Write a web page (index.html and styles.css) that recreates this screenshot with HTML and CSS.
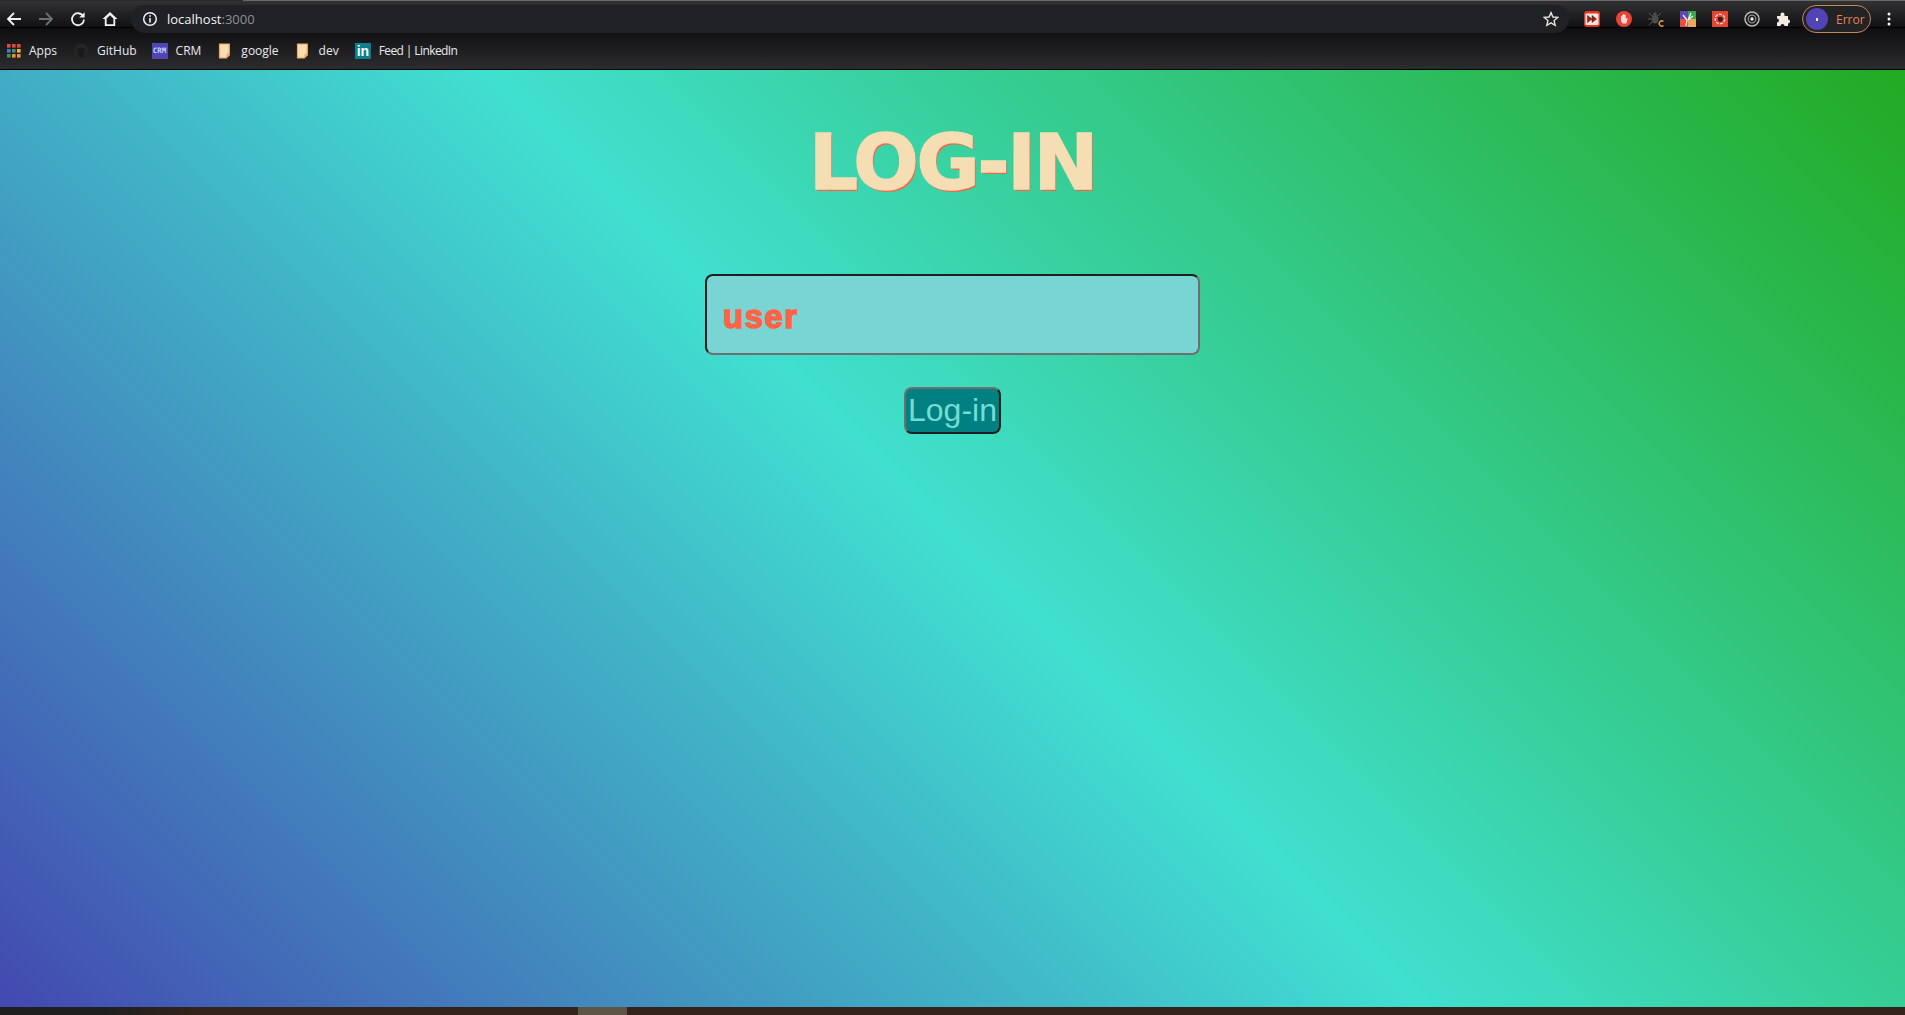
FILE: index.html
```html
<!DOCTYPE html>
<html lang="en">
<head>
    <meta charset="utf-8">
    <title>Log-in</title>
    <link rel="stylesheet" href="styles.css">
</head>
<body>
    <header class="toolbar">
        <nav class="nav-buttons">
            <svg class="nav-icon" viewBox="0 0 16 16"><path d="M15 8H2M8 2 2 8l6 6" fill="none" stroke="#f1f3f4" stroke-width="1.8"/></svg>
            <svg class="nav-icon" viewBox="0 0 16 16"><path d="M1 8h13M8 2l6 6-6 6" fill="none" stroke="#6f7072" stroke-width="1.8"/></svg>
            <svg class="nav-icon" viewBox="0 0 16 16"><path d="M13.2 5.2A6 6 0 1 0 14 8.5" fill="none" stroke="#f1f3f4" stroke-width="1.8"/><path d="M14.6 1.2v5.4H9.2z" fill="#f1f3f4"/></svg>
            <svg class="nav-icon" viewBox="0 0 16 16"><path d="M8 1 .5 8h2.300v7h10.400V8h2.300zM4.600 7.600 8 4.200l3.400 3.400v5.700H4.600z" fill="#f1f3f4" fill-rule="evenodd"/></svg>
        </nav>
        <div class="omnibox">
            <svg class="info-icon" viewBox="0 0 16 16"><circle cx="8" cy="8" r="6.3" fill="none" stroke="#f1f3f4" stroke-width="1.5"/><path d="M7.2 7h1.6v4.6H7.2zM7.2 4.2h1.6v1.6H7.2z" fill="#f1f3f4"/></svg>
            <span class="url">localhost<span class="url-port">:3000</span></span>
            <svg class="star-icon" viewBox="0 0 16 16"><path d="M8 1.6 9.9 6l4.8.4-3.6 3.2 1.1 4.7L8 11.8l-4.2 2.5 1.1-4.7-3.6-3.2L6.100 6z" fill="none" stroke="#e6e3da" stroke-width="1.400"/></svg>
        </div>
        <div class="extensions">
            <svg class="ext-icon" viewBox="0 0 16 16"><rect width="16" height="16" rx="3" fill="#e5352b"/><rect x="1.500" y="2.500" width="13" height="11.500" rx="1" fill="#f3e7dc"/><path d="M3.500 4.500l4.500 3.500-4.500 3.500zM8 4.500l4.500 3.500L8 11.500z" fill="#a51c18" stroke="#3a1c1a" stroke-width=".5"/></svg>
            <svg class="ext-icon" viewBox="0 0 16 16"><circle cx="8" cy="8" r="8" fill="#ea4335"/><path d="M5 7V5h1v2-3h1.200v3-4h1.300v4-3h1.200v4l1-1h1L10.500 12.500H6.500L5 10z" fill="#f6d9d0"/></svg>
            <svg class="ext-icon" viewBox="0 0 16 16"><ellipse cx="7" cy="8" rx="3.500" ry="4.500" fill="#4b4b4b"/><circle cx="7" cy="3" r="1.800" fill="#4b4b4b"/><path d="M1 2l3 3M13 2l-3 3M0 8h3M1 14l3-3" stroke="#5a5a5a"/><path d="M15.500 10.500a2.600 2.600 0 1 0 0 4" fill="none" stroke="#e2a23f" stroke-width="1.400"/></svg>
            <svg class="ext-icon" viewBox="0 0 16 16"><rect width="8" height="8" fill="#5b49b5"/><rect x="8" width="8" height="8" fill="#35a84a"/><rect y="8" width="8" height="8" fill="#ea4f3d"/><rect x="8" y="8" width="8" height="8" fill="#eda765"/><path d="M7 9 3 4M8 9l3-7M8 9l5-4M7 9l-1 6" stroke="#f4f0e8" stroke-width="1.300"/></svg>
            <svg class="ext-icon" viewBox="0 0 16 16"><rect width="16" height="16" fill="#ea4335"/><circle cx="8" cy="8" r="4.800" fill="none" stroke="#f6d9d0" stroke-width="1.400" stroke-dasharray="3 1.200"/><path d="M6 6h4l1 3-2 2-3-1z" fill="#30201e"/></svg>
            <svg class="ext-icon" viewBox="0 0 16 16"><circle cx="8" cy="8" r="7" fill="none" stroke="#b9bab8" stroke-width="1.500"/><circle cx="8" cy="8" r="3.800" fill="none" stroke="#8c8d8b" stroke-width="1.300"/><circle cx="8" cy="8" r="1.700" fill="#f1f3f4"/></svg>
            <svg class="ext-icon" viewBox="0 0 16 16"><path d="M1 5h3.500V3.500a2 2 0 0 1 4 0V5H12v3.500a2 2 0 0 1 0 4V15H8.500a2 2 0 0 0-4 0H1v-3.500a2 2 0 0 0 0-4z" fill="#f1ede2"/></svg>
        </div>
        <div class="profile">
            <span class="avatar"><span class="avatar-dot"></span></span>
            <span class="profile-label">Error</span>
        </div>
        <svg class="menu-icon" viewBox="0 0 4 16"><circle cx="2" cy="3" r="1.500"/><circle cx="2" cy="8" r="1.500"/><circle cx="2" cy="13" r="1.500"/></svg>
    </header>

    <div class="bookmarks">
        <a class="bookmark">
            <svg class="bm-icon" viewBox="-1 0 16 16">
                <rect x="1" y="1" width="3.600" height="3.600" fill="#e5493a"/><rect x="6" y="1" width="3.600" height="3.600" fill="#e5493a"/><rect x="11" y="1" width="3.600" height="3.600" fill="#e5493a"/>
                <rect x="1" y="6" width="3.600" height="3.600" fill="#3f7fdd"/><rect x="6" y="6" width="3.600" height="3.600" fill="#3a9a5b"/><rect x="11" y="6" width="3.600" height="3.600" fill="#f2b632"/>
                <rect x="1" y="11" width="3.600" height="3.600" fill="#3a9a5b"/><rect x="6" y="11" width="3.600" height="3.600" fill="#e89136"/><rect x="11" y="11" width="3.600" height="3.600" fill="#e89136"/>
            </svg>
            <span>Apps</span>
        </a>
        <a class="bookmark">
            <svg class="bm-icon" viewBox="0 0 16 16"><circle cx="8" cy="8" r="7.600" fill="#242424"/><path d="M5.500 14v-3C4 9.500 4 6.500 5.500 5h5c1.500 1.500 1.500 4.500 0 6v3z" fill="#1a1a1a"/></svg>
            <span>GitHub</span>
        </a>
        <a class="bookmark bookmark-shift">
            <span class="crm-icon">CRM</span>
            <span>CRM</span>
        </a>
        <a class="bookmark">
            <svg class="bm-icon" viewBox="0 0 16 16"><path d="M2.500 1h9.800v11l-3 3H2.500z" fill="#f5deb3" stroke="#eda560" stroke-width="1.200"/><path d="M12.300 11H10v3" fill="none" stroke="#eda560"/></svg>
            <span>google</span>
        </a>
        <a class="bookmark">
            <svg class="bm-icon" viewBox="0 0 16 16"><path d="M2.500 1h9.800v11l-3 3H2.500z" fill="#f5deb3" stroke="#eda560" stroke-width="1.200"/><path d="M12.300 11H10v3" fill="none" stroke="#eda560"/></svg>
            <span>dev</span>
        </a>
        <a class="bookmark">
            <span class="in-icon">in</span>
            <span class="bookmark-tight">Feed | LinkedIn</span>
        </a>
    </div>

    <main class="page">
        <h1 class="title">LOG-IN</h1>
        <form class="login-form">
            <input class="user-input" type="text" placeholder="user">
            <button class="login-btn" type="button">Log-in</button>
        </form>
    </main>

    <footer class="taskbar">
        <div class="task-thumb"></div>
        <span class="clock">17:21</span>
    </footer>
</body>
</html>
```

FILE: styles.css
```css
* {
    box-sizing: border-box;
}
html, body {
    height: 100%;
}
body {
    margin: 0;
    height: 100vh;
    display: flex;
    flex-direction: column;
    overflow: hidden;
    font-family: "Open Sans", Arial, sans-serif;
    background: #202124;
}

/* browser chrome */
.toolbar {
    height: 28px;
    flex: none;
    display: flex;
    position: relative;
    z-index: 2;
    padding-left: 6px;
    background:
        linear-gradient(to right, #2a2a2a 243px, #6a6a6a 243px) top / 100% 1px no-repeat,
        linear-gradient(#333335 0, #111113 27px);
    border-bottom: 1px solid #000;
}
.nav-buttons {
    display: flex;
    gap: 16px;
    padding-top: 11px;
    height: 28px;
}
.nav-icon {
    width: 16px;
    height: 16px;
}
.omnibox {
    width: 1438px;
    height: 28px;
    margin: 5px 0 0 13px;
    padding: 0 10px 0 11px;
    display: flex;
    align-items: center;
    background: #202124;
    border-radius: 14px;
}
.info-icon {
    width: 16px;
    height: 16px;
}
.url {
    margin-left: 9px;
    font-size: 13px;
    color: #f1f3f4;
}
.url-port {
    color: #8d9094;
}
.star-icon {
    width: 16px;
    height: 16px;
    margin-left: auto;
}
.extensions {
    display: flex;
    gap: 16px;
    margin-left: 15px;
    padding-top: 11px;
    height: 28px;
}
.ext-icon {
    width: 16px;
    height: 16px;
}
.profile {
    width: 69px;
    height: 28px;
    margin: 5px 0 0 10px;
    padding-left: 3px;
    display: flex;
    align-items: center;
    gap: 8px;
    border: 1px solid #c08a5a;
    border-radius: 14px;
    background: #232325;
}
.avatar {
    width: 22px;
    height: 22px;
    flex: none;
    display: flex;
    align-items: center;
    justify-content: center;
    border-radius: 50%;
    background: #5244b4;
}
.avatar-dot {
    width: 2px;
    height: 3px;
    background: #f0eee6;
}
.profile-label {
    font-size: 12px;
    color: #e8805a;
}
.menu-icon {
    width: 4px;
    height: 16px;
    margin: 11px 0 0 16px;
    fill: #f1f3f4;
}
.bookmarks {
    height: 42px;
    flex: none;
    display: flex;
    align-items: center;
    gap: 16px;
    padding: 4px 0 0 5px;
    background: linear-gradient(#0e0e10, #2c2c2e);
    border-bottom: 1px solid #000;
}
.bookmark {
    display: flex;
    align-items: center;
    gap: 8px;
    font-size: 12px;
    color: #e8eaed;
}
.bookmark-shift {
    margin-left: -1px;
}
.bookmark-tight {
    letter-spacing: -0.6px;
}
.bm-icon {
    width: 16px;
    height: 16px;
}
.crm-icon {
    width: 16px;
    height: 16px;
    background: #5244b4;
    color: #b9d5f0;
    font: bold 7.5px/16px "DejaVu Sans Mono", monospace;
    text-align: center;
}
.in-icon {
    width: 16px;
    height: 16px;
    padding-left: 2px;
    background: #0b7f8c;
    color: #fff;
    font: bold 14px/17px "Liberation Sans", sans-serif;
}

/* login page */
.page {
    flex: 1;
    display: flex;
    flex-direction: column;
    align-items: center;
    background: linear-gradient(45deg, #4349b0, #40e0d0, #22aa22);
}
.title {
    margin: 47px 0 0;
    font: bold 77px/1.2 "DejaVu Sans", Verdana, sans-serif;
    letter-spacing: -2.2px;
    color: wheat;
    -webkit-text-stroke: 1.5px wheat;
    text-shadow: 1.5px 1.5px tomato;
}
.login-form {
    margin-top: 65px;
    display: flex;
    flex-direction: column;
    align-items: center;
    gap: 32px;
}
.user-input {
    width: 495px;
    height: 81px;
    padding: 4px 16px 0;
    font: bold 33px "Liberation Sans", Arial, sans-serif;
    letter-spacing: 1.5px;
    color: tomato;
    background: #78d5d3;
    border: 2px solid;
    border-color: #1d1f20 #6f6f6f #6f6f6f #1d1f20;
    border-radius: 8px;
}
.user-input::placeholder {
    color: tomato;
    opacity: 1;
    -webkit-text-stroke: 1.5px tomato;
}
.login-btn {
    width: 97px;
    height: 47px;
    padding: 0;
    font: 32px "Liberation Sans", Arial, sans-serif;
    color: #73dcd6;
    background: teal;
    border: 2px solid;
    border-color: #6f6f6f #1d1f20 #1d1f20 #6f6f6f;
    border-radius: 8px;
}

/* bottom strip */
.taskbar {
    height: 8px;
    flex: none;
    display: flex;
    padding-left: 578px;
    overflow: hidden;
    background: linear-gradient(to right, #1f1f1f 100px, #33231b 200px);
}
.task-thumb {
    width: 49px;
    height: 8px;
    background: #5f5546;
}
.clock {
    margin-left: auto;
    padding: 5px 23px 0 0;
    font-size: 12px;
    line-height: 16px;
    color: #fff;
}
```
